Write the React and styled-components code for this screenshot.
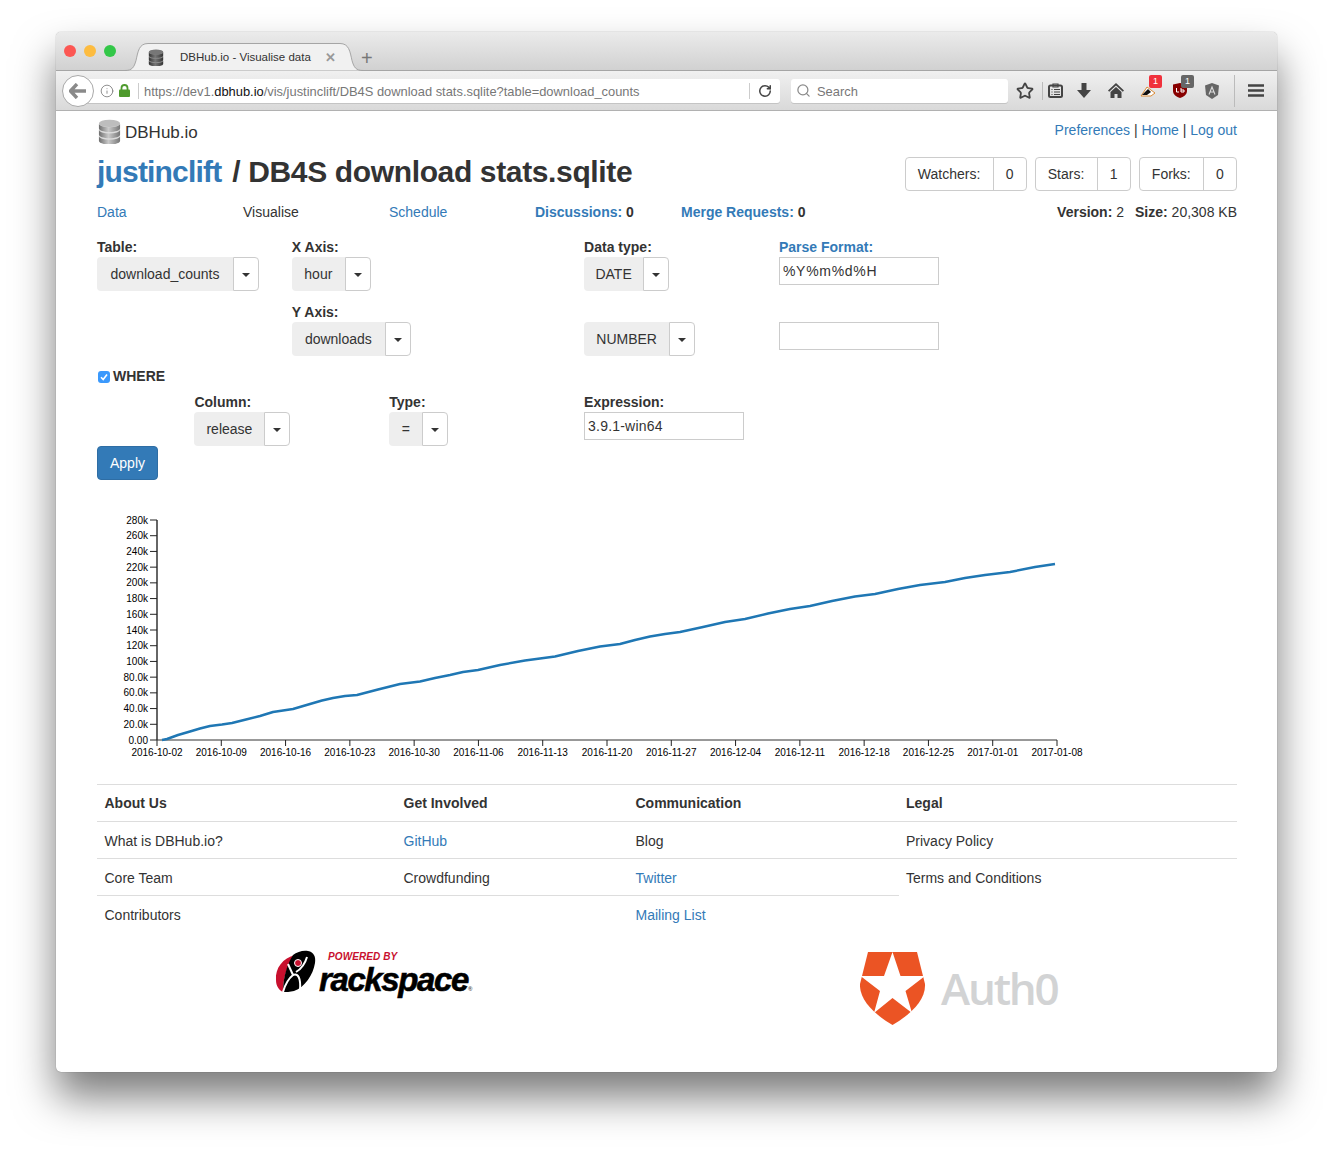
import React from "react";
import styled, { createGlobalStyle } from "styled-components";
import { Search, Star, RotateCw, Info } from "lucide-react";

const GlobalStyle = createGlobalStyle`
  html, body { margin: 0; padding: 0; background: #fff; }
  body { font-family: "Liberation Sans", Arial, sans-serif; font-size: 14px; color: #333; }
`;

const Stage = styled.div`
  width: 1333px;
  height: 1152px;
  padding: 32px 56px 0;
  box-sizing: border-box;
  overflow: hidden;
`;
const Win = styled.div`
  width: 1221px;
  height: 1040px;
  background: #fff;
  border-radius: 5px;
  box-shadow: 0 25px 42px rgba(0, 0, 0, 0.52), 0 0 1px rgba(0, 0, 0, 0.5);
  overflow: hidden;
`;
const TitleBar = styled.div`
  height: 39px;
  box-sizing: border-box;
  display: flex;
  align-items: flex-end;
  position: relative;
  padding-left: 8px;
  background: linear-gradient(#ebebeb, #d1d1d1);
  border-bottom: 1px solid #a5a5a5;
`;
const Lights = styled.div`
  display: flex;
  gap: 8px;
  align-self: flex-start;
  margin-top: 13px;
  width: 61px;
`;
const Light = styled.span`
  width: 12px;
  height: 12px;
  border-radius: 50%;
  background: ${(p) => p.$c};
`;
const Tab = styled.div`
  width: 238px;
  height: 29px;
  margin-bottom: -1px;
  position: relative;
  display: flex;
  align-items: center;
  font-size: 11.5px;
  color: #333;
`;
const TabShape = styled.svg`
  position: absolute;
  left: 0;
  top: 0;
`;
const TabIcon = styled.span`
  position: relative;
  display: flex;
  margin: 2px 0 0 23px;
  width: 32px;
`;
const TabTitle = styled.span`
  position: relative;
  width: 145px;
`;
const TabClose = styled.span`
  position: relative;
  margin-top: 1px;
  font-size: 13px;
  font-weight: 700;
  color: #999;
`;
const NewTab = styled.span`
  font-size: 20px;
  color: #777;
  line-height: 24px;
  margin: 0 0 0 -2px;
`;
const ToolBar = styled.div`
  height: 40px;
  box-sizing: border-box;
  display: flex;
  align-items: center;
  padding-left: 6px;
  background: linear-gradient(#f0f0f0, #d9d9d9);
  border-bottom: 1px solid #b1b1b1;
`;
const BackBtn = styled.div`
  width: 32px;
  height: 32px;
  box-sizing: border-box;
  flex: none;
  margin-right: -16px;
  z-index: 1;
  border: 1px solid #a9a9a9;
  border-radius: 50%;
  background: #fff;
  display: flex;
  align-items: center;
  justify-content: center;
`;
const UrlBar = styled.div`
  width: 702px;
  height: 24px;
  flex: none;
  box-sizing: border-box;
  background: #fff;
  border-radius: 3px;
  box-shadow: 0 1px 0 #c4c4c4;
  display: flex;
  align-items: center;
  padding-left: 22px;
  font-size: 12.9px;
  color: #777;
`;
const SiteInfo = styled.span`
  display: flex;
  align-items: center;
  gap: 5px;
  width: 38px;
  height: 16px;
  border-right: 1px solid #ccc;
  margin-right: 5px;
`;
const UrlText = styled.span`
  width: 605px;
  padding-top: 1px;
  white-space: nowrap;
  b { font-weight: 400; color: #111; }
`;
const UrlEnd = styled.span`
  display: flex;
  align-items: center;
  height: 16px;
  border-left: 1px solid #ccc;
  padding-left: 8px;
  color: #444;
`;
const SearchBar = styled(UrlBar)`
  width: 217px;
  margin-left: 11px;
  padding-left: 5px;
  gap: 6px;
  color: #777;
`;
const SearchText = styled.span`
  padding-top: 1px;
`;
const ToolIcon = styled.span`
  width: ${(p) => p.$w || 32}px;
  height: 24px;
  flex: none;
  position: relative;
  display: flex;
  align-items: center;
  justify-content: center;
`;
const ToolSep = styled.span`
  width: 1px;
  height: ${(p) => p.$h || 18}px;
  flex: none;
  background: #bbb;
  margin-left: ${(p) => p.$ml || 0}px;
`;
const Badge = styled.span`
  position: absolute;
  left: ${(p) => p.$left}px;
  top: -4px;
  width: 13px;
  height: 13px;
  border-radius: 2px;
  background: ${(p) => p.$c};
  color: #fff;
  font-size: 9px;
  line-height: 13px;
  text-align: center;
`;

const Content = styled.div`
  padding: 0 40px 0 41px;
`;
const TopRow = styled.div`
  display: flex;
  justify-content: space-between;
  padding-top: 8px;
  height: 25px;
`;
const Brand = styled.div`
  display: flex;
  align-items: flex-start;
  gap: 3px;
  font-size: 17px;
  line-height: 28px;
  color: #333;
`;
const TopLinks = styled.div`
  line-height: 20px;
  margin-top: 1px;
`;
const Link = styled.a`
  color: #337ab7;
  text-decoration: none;
`;
const TitleRow = styled.div`
  display: flex;
  justify-content: space-between;
  height: 34px;
  margin-top: 13px;
`;
const Title = styled.h1`
  margin: -2px 0 0;
  font-size: 30px;
  line-height: 34px;
  font-weight: 700;
  letter-spacing: -0.36px;
  color: #333;
`;
const TitleOwner = styled(Link)`
  letter-spacing: -0.82px;
  margin-right: 3px;
`;
const Counters = styled.div`
  display: flex;
  gap: 8px;
`;
const Counter = styled.div`
  display: flex;
  height: 34px;
  box-sizing: border-box;
  border: 1px solid #ccc;
  border-radius: 4px;
  line-height: 32px;
`;
const CounterLabel = styled.span`
  padding: 0 12.25px;
  border-right: 1px solid #ccc;
`;
const CounterValue = styled.span`
  width: 32px;
  text-align: center;
`;
const NavRow = styled.div`
  display: grid;
  grid-template-columns: repeat(4, 146px) 1fr auto;
  height: 17px;
  line-height: 17px;
  margin-top: 13px;
  b { font-weight: 700; }
`;
const VersionInfo = styled.span`
  display: flex;
  gap: 11px;
`;
const FormRow = styled.div`
  display: grid;
  grid-template-columns: repeat(8, 97.43px);
  margin-top: ${(p) => p.$mt}px;
`;
const Field = styled.div`
  grid-column: ${(p) => p.$col} / span ${(p) => p.$span || 2};
`;
const Label = styled.div`
  font-weight: 700;
  line-height: 16px;
  height: 18px;
`;
const Select = styled.div`
  display: inline-flex;
  height: 34px;
  line-height: 34px;
`;
const SelectValue = styled.span`
  width: ${(p) => p.$w}px;
  text-align: center;
  background: #eee;
  border-radius: 4px 0 0 4px;
`;
const SelectCaret = styled.span`
  width: 26px;
  box-sizing: border-box;
  border: 1px solid #ccc;
  border-radius: 0 4px 4px 0;
  display: flex;
  align-items: center;
  justify-content: center;
  &::after {
    content: "";
    border-top: 4px solid #333;
    border-left: 4px solid transparent;
    border-right: 4px solid transparent;
    margin-top: 1px;
  }
`;
const TextInput = styled.input`
  display: block;
  width: ${(p) => p.$w}px;
  height: 28px;
  box-sizing: border-box;
  border: 1px solid #ccc;
  padding: 0 3px;
  font: 14px "Liberation Sans", Arial, sans-serif;
  letter-spacing: ${(p) => p.$ls || 0}px;
  color: #333;
  outline: none;
`;
const WhereRow = styled.div`
  display: flex;
  align-items: center;
  gap: 3px;
  height: 16px;
  margin-top: 12px;
  font-weight: 700;
  padding-left: 1px;
`;
const CheckBox = styled.span`
  width: 12px;
  height: 12px;
  margin-top: 2px;
  border-radius: 3px;
  background: #3b99fc;
  display: flex;
  align-items: center;
  justify-content: center;
`;
const ApplyBtn = styled.button`
  display: block;
  width: 61px;
  height: 34px;
  border: 1px solid #2e6da4;
  border-radius: 4px;
  background: #337ab7;
  color: #fff;
  padding: 0;
  font: 14px "Liberation Sans", Arial, sans-serif;
`;
const Chart = styled.svg`
  display: block;
  margin-top: 30px;
`;
const AxisText = styled.text`
  font-size: 10px;
  font-family: "Liberation Sans", Arial, sans-serif;
  fill: #000;
`;
const FooterGrid = styled.div`
  display: grid;
  grid-template-columns: 299px 232px 270.5px 338.5px;
  margin-top: 20px;
`;
const Cell = styled.div`
  height: 37px;
  line-height: 37px;
  box-sizing: border-box;
  padding-left: 7.5px;
  padding-top: ${(p) => (p.$head ? 0 : 1)}px;
  border-top: ${(p) => (p.$plain ? "0" : "1px solid #ddd")};
  font-weight: ${(p) => (p.$head ? 700 : 400)};
`;
const Logos = styled.div`
  display: flex;
  align-items: flex-start;
  padding-left: 178px;
  margin-top: 18px;
`;
const Rackspace = styled.div`
  display: flex;
  width: 585px;
  height: 48px;
`;
const RackWords = styled.div`
  margin-left: 3px;
`;
const PoweredBy = styled.div`
  font-size: 10px;
  line-height: 11px;
  margin-top: 1px;
  font-weight: 700;
  font-style: italic;
  color: #c8102e;
  padding-left: 9px;
  letter-spacing: 0.1px;
`;
const RackName = styled.div`
  font-size: 33px;
  line-height: 30px;
  margin-top: 3px;
  font-weight: 700;
  font-style: italic;
  color: #000;
  letter-spacing: -1.4px;
  -webkit-text-stroke: 0.6px #000;
  sup { font-size: 6px; font-style: normal; -webkit-text-stroke: 0; letter-spacing: 0; vertical-align: baseline; color: #555; }
`;
const Auth0 = styled.div`
  display: flex;
  align-items: center;
  gap: 15px;
  margin-top: 2px;
`;
const Auth0Name = styled.span`
  font-family: "Open Sans", sans-serif;
  font-size: 44px;
  font-weight: 600;
  color: #d2d3d4;
  letter-spacing: -2.2px;
  margin-top: -2px;
`;

const DbIcon = ({ w, h, dark }) => {
  const id = dark ? "dbDark" : "dbLight";
  const stops = dark ? ["#333", "#777", "#333"] : ["#6e6e6e", "#c9c9c9", "#777"];
  return (
    <svg width={w} height={h} viewBox="1 0 22 26">
      <defs>
        <linearGradient id={id}>
          <stop offset="0" stopColor={stops[0]} />
          <stop offset="0.45" stopColor={stops[1]} />
          <stop offset="1" stopColor={stops[2]} />
        </linearGradient>
      </defs>
      {[19, 12.5, 6].map((y) => (
        <g key={y}>
          <path d={`M1 ${y - 1}v5c0 2 5 3.600 11 3.600s11-1.600 11-3.600v-5z`} fill={`url(#${id})`} />
          <ellipse cx="12" cy={y - 1} rx="11" ry="3.600" fill={dark ? "#8a8a8a" : "#dcdcdc"} />
        </g>
      ))}
      <ellipse cx="12" cy="4.600" rx="11" ry="3.800" fill={dark ? "#777" : "#bdbdbd"} />
    </svg>
  );
};

const yLabels = ["280k", "260k", "240k", "220k", "200k", "180k", "160k", "140k", "120k", "100k", "80.0k", "60.0k", "40.0k", "20.0k", "0.00"];
const xLabels = ["2016-10-02", "2016-10-09", "2016-10-16", "2016-10-23", "2016-10-30", "2016-11-06", "2016-11-13", "2016-11-20", "2016-11-27", "2016-12-04", "2016-12-11", "2016-12-18", "2016-12-25", "2017-01-01", "2017-01-08"];
const linePoints = [
  [162, 740], [167, 739], [178, 735], [190, 731.5], [200, 728.5], [210, 726], [222, 724.5], [232, 723], [246, 719.5], [260, 716], [273, 712], [283, 710.5], [293, 709], [310, 704], [322, 700.5], [333, 698], [345, 696], [357, 695], [378, 689.5], [400, 684], [420, 681.5], [435, 678], [450, 675], [463, 672], [478, 670], [500, 665], [525, 660.5], [540, 658.5], [555, 656.5], [578, 651], [600, 646.5], [620, 644], [635, 640], [650, 636.5], [665, 634], [680, 632], [703, 627], [725, 622], [745, 619], [768, 613.5], [790, 609], [810, 606], [832, 601], [855, 596.5], [875, 594], [898, 589], [920, 585], [945, 582], [965, 578], [985, 575], [1010, 572], [1035, 567], [1055, 564],
];

const footerRows = [
  [["About Us"], ["Get Involved"], ["Communication"], ["Legal"]],
  [["What is DBHub.io?"], ["GitHub", true], ["Blog"], ["Privacy Policy"]],
  [["Core Team"], ["Crowdfunding"], ["Twitter", true], ["Terms and Conditions"]],
  [["Contributors"], [""], ["Mailing List", true], [""]],
];

const App = () => {
  return (
    <Stage>
      <GlobalStyle />
      <Win>
        <TitleBar>
          <Lights>
            <Light $c="#fc5753" />
            <Light $c="#fdbc40" />
            <Light $c="#33c748" />
          </Lights>
          <Tab>
            <TabShape width="238" height="29" viewBox="0 0 238 29">
              <path d="M0 28.500c7 0 9-3 11-10 2-9 3-17 12-17h192c9 0 10 8 12 17 2 7 4 10 11 10" fill="#f1f1f1" stroke="#a5a5a5" />
            </TabShape>
            <TabIcon><DbIcon w={16} h={17} dark /></TabIcon>
            <TabTitle>DBHub.io - Visualise data</TabTitle>
            <TabClose>✕</TabClose>
          </Tab>
          <NewTab>+</NewTab>
        </TitleBar>
        <ToolBar>
          <BackBtn>
            <svg width="18" height="16" viewBox="0 0 18 16">
              <path d="M8 1 1.500 8 8 15M2 8h15" fill="none" stroke="#8a8a8a" strokeWidth="3.400" />
            </svg>
          </BackBtn>
          <UrlBar>
            <SiteInfo>
              <Info size={14} color="#777" strokeWidth={1.4} />
              <svg width="11" height="13" viewBox="0 0 11 13">
                <path d="M2.500 6V4a3 3 0 0 1 6 0v2" fill="none" stroke="#4e9a2d" strokeWidth="1.800" />
                <rect x="0" y="5.500" width="11" height="7.500" rx="1" fill="#4e9a2d" />
              </svg>
            </SiteInfo>
            <UrlText>https://dev1.<b>dbhub.io</b>/vis/justinclift/DB4S download stats.sqlite?table=download_counts</UrlText>
            <UrlEnd><RotateCw size={14} strokeWidth={2.6} /></UrlEnd>
          </UrlBar>
          <SearchBar>
            <Search size={15} color="#8a8a8a" strokeWidth={2} />
            <SearchText>Search</SearchText>
          </SearchBar>
          <ToolIcon $w={34}><Star size={18} color="#444" strokeWidth={2.4} /></ToolIcon>
          <ToolSep />
          <ToolIcon $w={24}>
            <svg width="15" height="15" viewBox="0 0 15 15">
              <rect x="1" y="2.500" width="13" height="11.500" rx="1.500" fill="none" stroke="#444" strokeWidth="2" />
              <path d="M5 1h5v3H5zM3.500 6.500h1M6 6.500h6M3.500 9h1M6 9h6M3.500 11.500h1M6 11.500h6" fill="none" stroke="#444" strokeWidth="1.200" />
            </svg>
          </ToolIcon>
          <ToolIcon $w={33}>
            <svg width="14" height="15" viewBox="0 0 14 15">
              <path d="M4.500 0h5v7H14L7 15 0 7h4.500z" fill="#444" />
            </svg>
          </ToolIcon>
          <ToolIcon>
            <svg width="16" height="15" viewBox="0 0 16 15">
              <path d="M8 0 0 7.500l1.200 1.200L8 2.400l6.800 6.300L16 7.500z" fill="#444" />
              <path d="M8 4 2.500 9v6h4v-4h3v4h4V9z" fill="#444" />
            </svg>
          </ToolIcon>
          <ToolIcon>
            <svg width="16" height="14" viewBox="0 0 16 14">
              <path d="M1 12 7 3l8 6-4 3z" fill="#fff" stroke="#d98a35" strokeWidth="1" />
              <path d="M2 11l6-6 3 3-4 3z" fill="#111" />
            </svg>
            <Badge $left={17} $c="#f0313c">1</Badge>
          </ToolIcon>
          <ToolIcon>
            <svg width="14" height="15" viewBox="0 0 14 15">
              <path d="M0 1.500 7 0l7 1.500V8c0 3.500-3.500 6-7 7-3.500-1-7-3.500-7-7z" fill="#800" />
              <path d="M3.500 5v4h2.500M8 5v4M8 7h3v2H8" fill="none" stroke="#fff" strokeWidth="1" />
            </svg>
            <Badge $left={17} $c="#666">1</Badge>
          </ToolIcon>
          <ToolIcon>
            <svg width="14" height="16" viewBox="0 0 14 16">
              <path d="M7 0 14 2.500 13 12 7 16 1 12 0 2.500z" fill="#666" />
              <path d="M4 11.500 7 4l3 7.500M5 9h4" fill="none" stroke="#ddd" strokeWidth="1.100" />
            </svg>
          </ToolIcon>
          <ToolSep $h={32} $ml={6} />
          <ToolIcon $w={42}>
            <svg width="16" height="13" viewBox="0 0 16 13">
              <path d="M0 1.500h16M0 6.500h16M0 11.500h16" stroke="#444" strokeWidth="2.600" />
            </svg>
          </ToolIcon>
        </ToolBar>
        <Content>
          <TopRow>
            <Brand>
              <DbIcon w={25} h={25} />
              DBHub.io
            </Brand>
            <TopLinks>
              <Link>Preferences</Link> | <Link>Home</Link> | <Link>Log out</Link>
            </TopLinks>
          </TopRow>
          <TitleRow>
            <Title><TitleOwner>justinclift</TitleOwner> / DB4S download stats.sqlite</Title>
            <Counters>
              <Counter><CounterLabel>Watchers:</CounterLabel><CounterValue>0</CounterValue></Counter>
              <Counter><CounterLabel>Stars:</CounterLabel><CounterValue>1</CounterValue></Counter>
              <Counter><CounterLabel>Forks:</CounterLabel><CounterValue>0</CounterValue></Counter>
            </Counters>
          </TitleRow>
          <NavRow>
            <Link>Data</Link>
            <span>Visualise</span>
            <Link>Schedule</Link>
            <span><Link><b>Discussions:</b></Link> <b>0</b></span>
            <span><Link><b>Merge Requests:</b></Link> <b>0</b></span>
            <VersionInfo>
              <span><b>Version:</b> 2</span>
              <span><b>Size:</b> 20,308 KB</span>
            </VersionInfo>
          </NavRow>
          <FormRow $mt={18}>
            <Field $col={1}>
              <Label>Table:</Label>
              <Select><SelectValue $w={136}>download_counts</SelectValue><SelectCaret /></Select>
            </Field>
            <Field $col={3} $span={3}>
              <Label>X Axis:</Label>
              <Select><SelectValue $w={53}>hour</SelectValue><SelectCaret /></Select>
            </Field>
            <Field $col={6}>
              <Label>Data type:</Label>
              <Select><SelectValue $w={59}>DATE</SelectValue><SelectCaret /></Select>
            </Field>
            <Field $col={8}>
              <Label><Link>Parse Format:</Link></Label>
              <TextInput $w={160} $ls={0.7} defaultValue="%Y%m%d%H" />
            </Field>
          </FormRow>
          <FormRow $mt={13}>
            <Field $col={3} $span={3}>
              <Label>Y Axis:</Label>
              <Select><SelectValue $w={93}>downloads</SelectValue><SelectCaret /></Select>
            </Field>
            <Field $col={6}>
              <Label />
              <Select><SelectValue $w={85}>NUMBER</SelectValue><SelectCaret /></Select>
            </Field>
            <Field $col={8}>
              <Label />
              <TextInput $w={160} />
            </Field>
          </FormRow>
          <WhereRow>
            <CheckBox>
              <svg width="8" height="8" viewBox="0 0 8 8">
                <path d="M1 4.200 3.200 6.500 7 1.500" fill="none" stroke="#fff" strokeWidth="1.600" />
              </svg>
            </CheckBox>
            WHERE
          </WhereRow>
          <FormRow $mt={10}>
            <Field $col={2}>
              <Label>Column:</Label>
              <Select><SelectValue $w={70}>release</SelectValue><SelectCaret /></Select>
            </Field>
            <Field $col={4}>
              <Label>Type:</Label>
              <Select><SelectValue $w={33}>=</SelectValue><SelectCaret /></Select>
            </Field>
            <Field $col={6} $span={3}>
              <Label>Expression:</Label>
              <TextInput $w={160} $ls={0.2} defaultValue="3.9.1-win64" />
            </Field>
          </FormRow>
          <ApplyBtn>Apply</ApplyBtn>
          <Chart width="1000" height="254" viewBox="97 510 1000 254">
            <path d="M157 520V740" stroke="#666" strokeWidth="2" fill="none" />
            <path d="M157 740H1057" stroke="#333" strokeWidth="1" fill="none" />
            {yLabels.map((t, i) => {
              const y = 520 + (i * 220) / 14;
              return (
                <g key={t}>
                  <path d={`M150 ${y}H157`} stroke="#222" strokeWidth="1" />
                  <AxisText x="148" y={y + 3.5} textAnchor="end">{t}</AxisText>
                </g>
              );
            })}
            {xLabels.map((t, i) => {
              const x = 157 + (i * 900) / 14;
              return (
                <g key={t}>
                  <path d={`M${x} 740V746`} stroke="#222" strokeWidth="1" />
                  <AxisText x={x} y="756" textAnchor="middle">{t}</AxisText>
                </g>
              );
            })}
            <polyline points={linePoints.map((p) => p.join(",")).join(" ")} fill="none" stroke="#1f77b4" strokeWidth="2.5" strokeLinejoin="round" />
          </Chart>
          <FooterGrid>
            {footerRows.map((row, r) =>
              row.map(([text, link], c) => (
                <Cell key={`${r}-${c}`} $head={r === 0} $plain={r === 3 && c === 3}>
                  {link ? <Link>{text}</Link> : text}
                </Cell>
              ))
            )}
          </FooterGrid>
          <Logos>
            <Rackspace>
              <svg width="41" height="44" viewBox="0 0 41 44">
                <path d="M20 5C8 8 0 18 1 30c0 6 3 10 7 12 0-12 3-26 12-37z" fill="#c8102e" />
                <path d="M18 5c4-3 10-5 15-4 6 1 8 6 7 12-2 12-10 24-21 28-4 1-8 1-11 1 0-12 3-26 10-37z" fill="#000" />
                <path d="M8 42c2-7 5-13 10-17 5-2 8 3 7 15M18 25l-5-11M21 22c5-3 9-8 11-15" fill="none" stroke="#fff" strokeWidth="2" />
                <circle cx="23" cy="13" r="3.500" fill="#c8102e" stroke="#fff" strokeWidth="1" />
              </svg>
              <RackWords>
                <PoweredBy>POWERED BY</PoweredBy>
                <RackName>rackspace<sup>®</sup></RackName>
              </RackWords>
            </Rackspace>
            <Auth0>
              <svg width="66" height="74" viewBox="860 952 66 74">
                <path d="M868 952H917L925 984C926 1000 910 1015 892.500 1025 875 1015 859 1000 860 984z" fill="#eb5424" />
                <path d="M892.500 952 900.500 976H925L905.500 991 912 1013 892.500 998 874 1013 880 991 860.500 976H884z" fill="#fff" />
              </svg>
              <Auth0Name>Auth0</Auth0Name>
            </Auth0>
          </Logos>
        </Content>
      </Win>
    </Stage>
  );
};

export default App;
